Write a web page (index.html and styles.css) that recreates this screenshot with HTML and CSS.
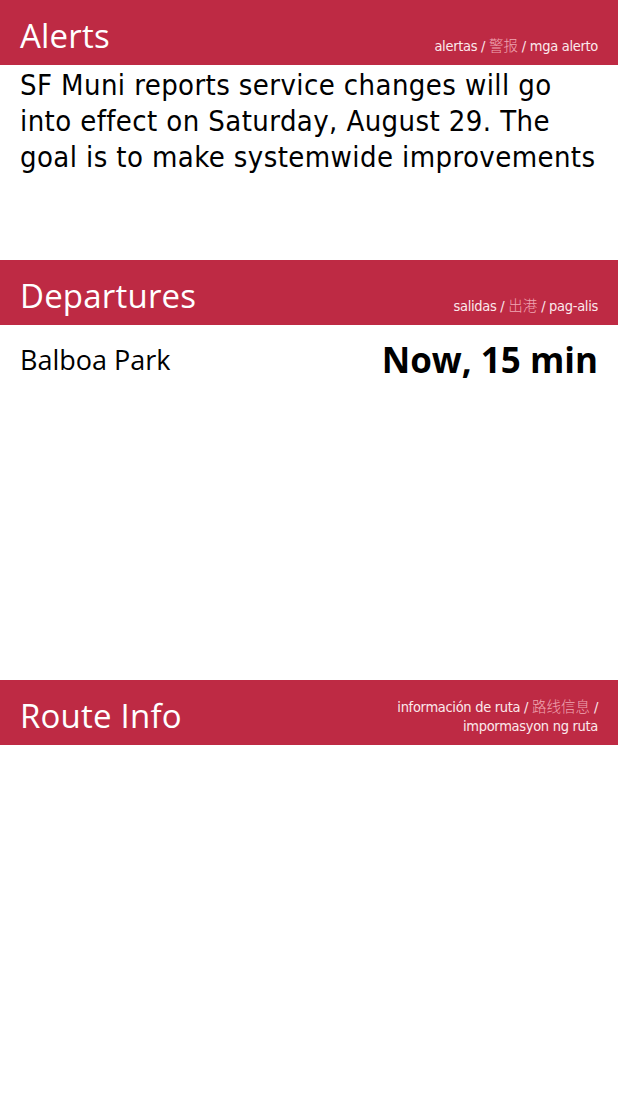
FILE: index.html
```html
<!DOCTYPE html>
<html lang="en">
<head>
    <meta charset="UTF-8">
    <meta name="viewport" content="width=device-width, initial-scale=1.0">
    <title>Muni Stop</title>
    <link rel="stylesheet" href="styles.css">
</head>
<body>
    <section class="panel alerts">
        <div class="panel-header">
            <h1>Alerts</h1>
            <div class="translations">alertas / <span class="cjk">警报</span> / mga alerto</div>
        </div>
        <div class="alert-body">
            <p>SF Muni reports service changes will go into effect on Saturday, August 29. The goal is to make systemwide improvements to reliability and reduce crowding.</p>
        </div>
    </section>
    <section class="panel departures">
        <div class="panel-header">
            <h1>Departures</h1>
            <div class="translations">salidas / <span class="cjk">出港</span> / pag-alis</div>
        </div>
        <div class="departure-row">
            <span class="destination">Balboa Park</span>
            <span class="times">Now, 15 min</span>
        </div>
    </section>
    <section class="panel route-info">
        <div class="panel-header">
            <h1>Route Info</h1>
            <div class="translations">información de ruta / <span class="cjk">路线信息</span> /<br>impormasyon ng ruta</div>
        </div>
    </section>
</body>
</html>
```

FILE: styles.css
```css
body {
    margin: 0;
    background-color: #fff;
    font-family: "Open Sans", "Noto Sans", sans-serif;
    color: #000;
}
.panel-header {
    display: flex;
    justify-content: space-between;
    align-items: flex-end;
    height: 65px;
    box-sizing: border-box;
    padding: 0 20px 9px 20px;
    background-color: #be2a44;
    color: #fff;
}
.panel-header h1 {
    margin: 0;
    font-size: 33px;
    font-weight: 400;
    line-height: 40px;
    letter-spacing: 0.2px;
}
.translations {
    font-family: "DejaVu Sans Condensed", sans-serif;
    font-size: 14.5px;
    line-height: 19px;
    letter-spacing: -0.3px;
    text-align: right;
    color: #fbe9ec;
}
.cjk {
    font-family: "Noto Sans CJK SC", sans-serif;
    font-weight: 300;
    letter-spacing: 0;
    color: #f0a6b3;
}
.alerts {
    height: 260px;
}
.alert-body {
    height: 110px;
    overflow: hidden;
    padding: 2px 20px 0 20px;
    box-sizing: border-box;
}
.alert-body p {
    margin: 0;
    font-family: "DejaVu Sans Condensed", sans-serif;
    font-size: 29px;
    line-height: 36px;
    letter-spacing: 0.4px;
}
.departures {
    height: 420px;
}
.departure-row {
    display: flex;
    justify-content: space-between;
    align-items: center;
    padding: 12px 20px 0 20px;
    height: 44px;
}
.destination {
    font-size: 27px;
}
.times {
    font-size: 35px;
    font-weight: 700;
}
```
